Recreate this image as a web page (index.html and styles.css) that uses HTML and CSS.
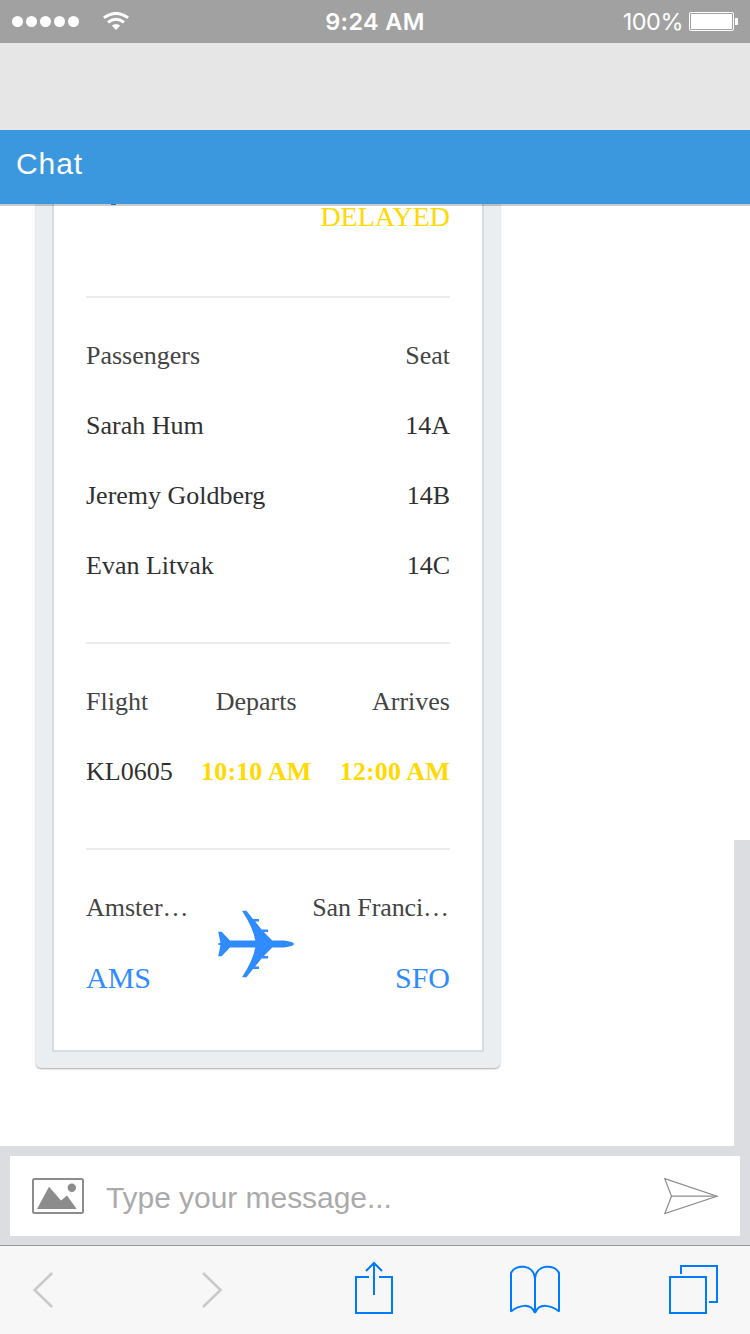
FILE: index.html
```html
<!DOCTYPE html>
<html lang="en">
<head>
<meta charset="utf-8">
<title>Chat</title>
<link rel="stylesheet" href="styles.css">
</head>
<body>
<div class="screen">
  <div class="status">
    <div class="signal">
      <i class="dot"></i><i class="dot"></i><i class="dot"></i><i class="dot"></i><i class="dot"></i>
      <svg class="wifi" width="26" height="18" viewBox="0 0 26 18" fill="none" stroke="#fff">
        <path d="M.9 5.8Q13-3 25.1 5.8" stroke-width="3"/>
        <path d="M5 10.3Q13 4.4 21 10.3" stroke-width="2.9"/>
        <path d="M8.8 13.6Q13 10.4 17.2 13.6L13 18Z" fill="#fff" stroke="none"/>
      </svg>
    </div>
    <div class="time">9:24 AM</div>
    <div class="power"><span class="percent">100%</span><span class="battery"><i class="charge"></i></span><i class="nub"></i></div>
  </div>
  <div class="address"></div>
  <header class="header">Chat</header>
  <main class="chat">
    <div class="card">
      <article class="pass">
        <i class="descender"></i>
        <div class="delayed">DELAYED</div>
        <section class="section passengers">
          <div class="row label"><span>Passengers</span><span>Seat</span></div>
          <div class="row"><span>Sarah Hum</span><span>14A</span></div>
          <div class="row"><span>Jeremy Goldberg</span><span>14B</span></div>
          <div class="row"><span>Evan Litvak</span><span>14C</span></div>
        </section>
        <section class="section flight">
          <div class="col"><span class="label">Flight</span><span>KL0605</span></div>
          <div class="col center"><span class="label">Departs</span><b class="changed">10:10 AM</b></div>
          <div class="col end"><span class="label">Arrives</span><b class="changed">12:00 AM</b></div>
        </section>
        <section class="section route">
          <div class="place"><span class="label">Amster…</span><span class="code">AMS</span></div>
          <svg class="plane" width="76" height="68" viewBox="0 0 76 68" fill="#2f8bff">
            <path d="M24 .8H28.4L35 9H41V11.4H37.2L43.5 19.5H50V22H45.8L54.2 30.5H66Q76 31.7 76 34Q76 36.3 66 37.5H54.2L45.8 46H50V48.5H43.5L37.2 56.6H41V59H35L28.4 67.2H24Q35 50.5 37.3 37.5H12L3.6 46.2H.2L2.4 35.2L0 34.6V33.4L2.4 32.8L.2 21.8H3.6L12 30.5H37.3Q35 17.5 24 .8Z"/>
          </svg>
          <div class="place end"><span class="label san">San Franci…</span><span class="code">SFO</span></div>
        </section>
      </article>
    </div>
    <div class="track"></div>
  </main>
  <div class="composer">
    <div class="entry">
      <svg class="photo" width="52" height="36" viewBox="0 0 52 36">
        <rect x="1" y="1" width="50" height="34" rx="1.5" fill="none" stroke="#8c8c8c" stroke-width="2"/>
        <path d="M5 31L17 8.7L29 22.5L35 17.5L44.7 31Z" fill="#8c8c8c"/>
        <circle cx="39.8" cy="9.7" r="4.2" fill="#8c8c8c"/>
      </svg>
      <span class="placeholder">Type your message...</span>
      <svg class="send" width="56" height="38" viewBox="0 0 56 38" fill="none" stroke="#8c8c8c" stroke-width="1.2">
        <path d="M1.8 1.6L54 19.2L1.8 36.6L8.5 19.2Z"/><path d="M8.5 19.2H54"/>
      </svg>
    </div>
  </div>
  <nav class="toolbar">
    <svg width="750" height="88" viewBox="0 0 750 88" fill="none">
      <g stroke="#c9c9c9" stroke-width="2.5">
        <path d="M52.2 27L34.6 44L52.2 61"/><path d="M203 27L220.6 44L203 61"/>
      </g>
      <g stroke="#007aff" stroke-width="2">
        <path d="M369 31H356V67H392V31H379M374 49V17M366 25L374 17L382 25"/>
        <path stroke-linejoin="bevel" d="M535 67V33C534 17.5 515 18 511 27V65.5C519 59 531 56.500 535 67C539 56.500 551 59 559 65.500V27C555 18 536 17.500 535 33"/>
        <path d="M670 31H706V67H670ZM681 28V20H717V56H709"/>
      </g>
    </svg>
  </nav>
</div>
</body>
</html>
```
FILE: styles.css
```css
* { box-sizing: border-box; }
body { margin: 0; }
.screen { width: 750px; height: 1334px; display: flex; flex-direction: column; overflow: hidden; background: #fff; font-family: "Liberation Sans", sans-serif; }

.status { height: 43px; flex: none; display: grid; grid-template-columns: 1fr auto 1fr; align-items: center; padding: 0 12px; background: #a1a1a1; color: #fff; font: 24px/42px Inter, sans-serif; }
.signal { display: flex; align-items: center; gap: 3px; }
.dot { width: 11px; height: 11px; border-radius: 50%; background: #fff; }
.wifi { margin-left: 21px; margin-top: -2px; }
.time { font-weight: 600; font-size: 23.5px; letter-spacing: .35px; padding-top: 1px; }
.power { display: flex; align-items: center; justify-content: flex-end; }
.percent { font-size: 23.5px; font-weight: 400; letter-spacing: -.5px; margin-right: 6px; padding-top: 1px; }
.battery { width: 45px; height: 19px; border: 1px solid #fff; border-radius: 2px; padding: 1px; display: flex; }
.charge { flex: 1; background: #fff; }
.nub { width: 3px; height: 7px; background: #fff; margin-left: 1px; }

.address { height: 87px; flex: none; background: #e6e6e6; }
.header { height: 74px; flex: none; position: relative; z-index: 1; padding: 16px 16px 0; background: #3b97de; box-shadow: 0 2px 0 rgba(0, 0, 0, .2); color: #fff; font-size: 30px; line-height: 36px; letter-spacing: .9px; }

.chat { height: 952px; flex: none; display: flex; justify-content: space-between; align-items: flex-start; margin-top: -10px; padding: 10px 0 0 36px; overflow: hidden; }
.card { width: 464px; height: 864px; padding: 0 16px 16px; background: #eaeef1; border-radius: 0 0 5px 5px; box-shadow: 0 1px 2px rgba(0, 0, 0, .33); }
.pass { height: 848px; position: relative; padding: 0 32px; border: 2px solid #d3dde6; border-top: 0; background: #fff; color: #303030; font: 26px/30px "Liberation Serif", serif; }
.descender { position: absolute; left: 57px; top: 0; width: 5px; height: 1px; background: #2f8bff; }
.delayed { height: 92px; color: #ffd900; font-size: 28px; line-height: 26px; text-align: right; }
.label { color: #444; }
.section { border-top: 2px solid #ededed; padding-top: 43px; }
.passengers { height: 346px; display: flex; flex-direction: column; gap: 40px; }
.row { display: flex; justify-content: space-between; }
.flight { height: 206px; display: flex; justify-content: space-between; }
.col { display: flex; flex-direction: column; gap: 40px; }
.center { align-items: center; }
.end { align-items: flex-end; }
.changed { color: #ffd900; letter-spacing: .15px; }
.route { display: flex; justify-content: space-between; align-items: flex-start; }
.place { width: 132px; display: flex; flex-direction: column; gap: 38px; white-space: nowrap; }
.place.end { width: 156px; }
.san { margin-right: 1px; letter-spacing: -.1px; }
.code { color: #2f8bff; font-size: 30px; line-height: 34px; }
.plane { margin-top: 17px; }
.track { width: 16px; height: 306px; margin-top: 636px; background: #dcdde1; }

.composer { height: 99px; flex: none; padding: 10px 10px 9px; background: #dcdde1; }
.entry { height: 80px; display: flex; align-items: center; padding: 0 21px 0 22px; background: #fff; }
.placeholder { flex: 1; margin-left: 22px; padding-top: 4px; color: #aaa; font-size: 30px; line-height: 36px; letter-spacing: -.05px; }
.toolbar { height: 89px; flex: none; border-top: 1px solid #98999c; background: #f7f7f7; }
.toolbar svg { display: block; }
```
